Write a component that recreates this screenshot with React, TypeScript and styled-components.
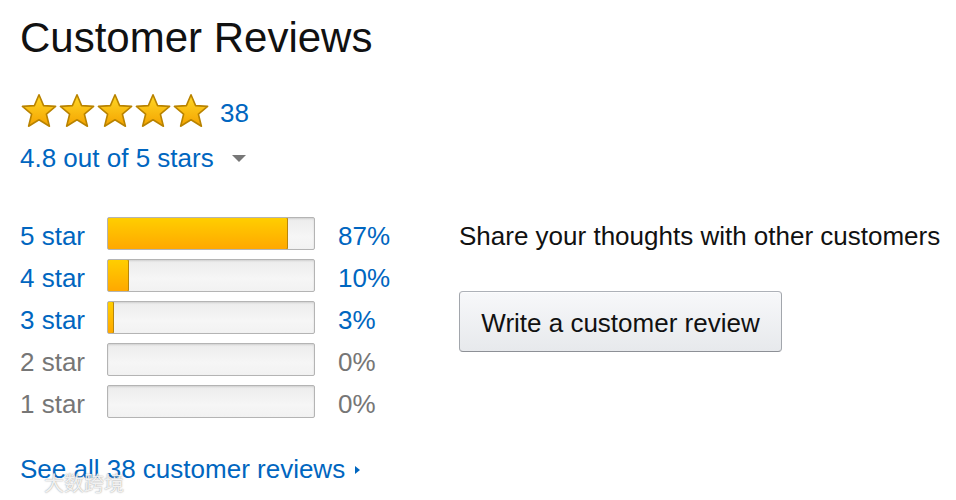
import React from "react";
import styled, { createGlobalStyle } from "styled-components";

const GlobalStyle = createGlobalStyle`
  html, body { margin: 0; padding: 0; background: #ffffff; }
  body { font-family: "Liberation Sans", Arial, sans-serif; }
`;

const Page = styled.div`
  position: relative;
  width: 956px;
  height: 500px;
  padding: 14px 0 0 20px;
  box-sizing: border-box;
  overflow: hidden;
  font-family: "Liberation Sans", Arial, sans-serif;
`;

const Title = styled.h1`
  margin: 0;
  font-size: 42px;
  font-weight: 400;
  line-height: 48px;
  color: #111111;
`;

const StarsRow = styled.div`
  display: flex;
  align-items: flex-start;
  height: 36px;
  margin-top: 31px;
`;

const Stars = styled.div`
  display: flex;
  margin-right: 10px;
`;

const Link = styled.a`
  color: #0066c0;
  text-decoration: none;
  font-size: 26px;
`;

const Count = styled(Link)`
  line-height: 40px;
`;

const RatingLine = styled.div`
  display: flex;
  align-items: center;
  margin-top: 14px;
  line-height: 30px;
  font-size: 26px;
  color: #0066c0;
`;

const Caret = styled.span`
  display: inline-block;
  width: 0;
  height: 0;
  margin-left: 18px;
  margin-top: 0px;
  border-left: 7px solid transparent;
  border-right: 7px solid transparent;
  border-top: 7px solid #777777;
`;

const Section = styled.div`
  display: flex;
  margin-top: 44px;
`;

const Histogram = styled.div`
  display: flex;
  flex-direction: column;
  gap: 9px;
  width: 439px;
`;

const Row = styled.div<{ $muted: boolean }>`
  display: flex;
  align-items: flex-start;
  height: 33px;
  font-size: 26px;
  line-height: 38px;
  color: ${(p) => (p.$muted ? "#767676" : "#0066c0")};
`;

const RowLabel = styled.span`
  width: 87px;
  white-space: nowrap;
`;

const Bar = styled.div`
  position: relative;
  width: 208px;
  height: 33px;
  box-sizing: border-box;
  border: 1px solid #b4b4b4;
  border-radius: 2px;
  background: linear-gradient(#ececec, #f6f6f6 60%, #f2f2f2);
  box-shadow: inset 0 1px 2px rgba(0, 0, 0, 0.12);
  overflow: hidden;
`;

const Fill = styled.div`
  box-sizing: border-box;
  border: 1px solid #b8860b;
  border-radius: 2px;
  margin: -1px 0 0 -1px;
  height: 33px;
  background: linear-gradient(#ffce00, #ffa800);
`;

const Percent = styled.span`
  margin-left: 23px;
  white-space: nowrap;
`;

const Side = styled.div`
  display: flex;
  flex-direction: column;
  align-items: flex-start;
`;

const ShareText = styled.div`
  font-size: 26px;
  line-height: 38px;
  color: #111111;
  white-space: nowrap;
`;

const Button = styled.button`
  margin-top: 36px;
  width: 323px;
  height: 61px;
  box-sizing: border-box;
  border: 1px solid #adb1b8;
  border-color: #adb1b8 #a2a6ac #8d9096;
  border-radius: 4px;
  background: linear-gradient(#f7f8fa, #e7e9ec);
  box-shadow: inset 0 1px 0 rgba(255, 255, 255, 0.6);
  font-family: "Liberation Sans", Arial, sans-serif;
  font-size: 26px;
  line-height: 62px;
  color: #111111;
  padding: 0;
  cursor: pointer;
`;

const SeeAll = styled.div`
  display: flex;
  align-items: center;
  margin-top: 36px;
  line-height: 30px;
  font-size: 26px;
  color: #0066c0;
`;

const Arrow = styled.span`
  display: inline-block;
  width: 0;
  height: 0;
  margin-left: 10px;
  margin-top: 2px;
  border-top: 4px solid transparent;
  border-bottom: 4px solid transparent;
  border-left: 5px solid #0066c0;
`;

const Watermark = styled.div`
  position: absolute;
  left: 44px;
  top: 472px;
  font-family: "Noto Sans CJK SC", sans-serif;
  font-size: 20px;
  line-height: 22px;
  color: rgba(255, 255, 255, 0.85);
  text-shadow: 0 0 1px rgba(120, 120, 120, 0.6), 0 0 2px rgba(120, 120, 120, 0.4);
  pointer-events: none;
`;

const StarIcon: React.FC<{ id: string }> = ({ id }) => (
  <svg width="38" height="36" viewBox="0 0 38 36">
    <defs>
      <linearGradient id={id} x1="0" y1="0" x2="0" y2="1">
        <stop offset="0" stopColor="#ffd826" />
        <stop offset="1" stopColor="#f4a300" />
      </linearGradient>
    </defs>
    <path
      d="M19 1.8 L23.6 12.6 L35.6 13.4 L26.4 21.2 L29.4 33.2 L19 26.8 L8.6 33.2 L11.6 21.2 L2.4 13.4 L14.4 12.6 Z"
      fill={`url(#${id})`}
      stroke="#b98300"
      strokeWidth="1.6"
      strokeLinejoin="round"
    />
  </svg>
);

const rows = [
  { label: "5 star", pct: 87, fill: 87.5 },
  { label: "4 star", pct: 10, fill: 10 },
  { label: "3 star", pct: 3, fill: 3 },
  { label: "2 star", pct: 0, fill: 0 },
  { label: "1 star", pct: 0, fill: 0 },
];

export default function App() {
  return (
    <>
      <GlobalStyle />
      <Page>
        <Title>Customer Reviews</Title>
        <StarsRow>
          <Stars>
            {[0, 1, 2, 3, 4].map((i) => (
              <StarIcon key={i} id={`sg${i}`} />
            ))}
          </Stars>
          <Count href="#">38</Count>
        </StarsRow>
        <RatingLine>
          4.8 out of 5 stars
          <Caret />
        </RatingLine>
        <Section>
          <Histogram>
            {rows.map((r) => (
              <Row key={r.label} $muted={r.pct === 0}>
                <RowLabel>{r.label}</RowLabel>
                <Bar>
                  {r.fill > 0 && (
                    <Fill style={{ width: `calc(${r.fill}% + 1px)`, minWidth: "6px" }} />
                  )}
                </Bar>
                <Percent>{r.pct}%</Percent>
              </Row>
            ))}
          </Histogram>
          <Side>
            <ShareText>Share your thoughts with other customers</ShareText>
            <Button>Write a customer review</Button>
          </Side>
        </Section>
        <SeeAll>
          See all 38 customer reviews
          <Arrow />
        </SeeAll>
        <Watermark>大数跨境</Watermark>
      </Page>
    </>
  );
}
